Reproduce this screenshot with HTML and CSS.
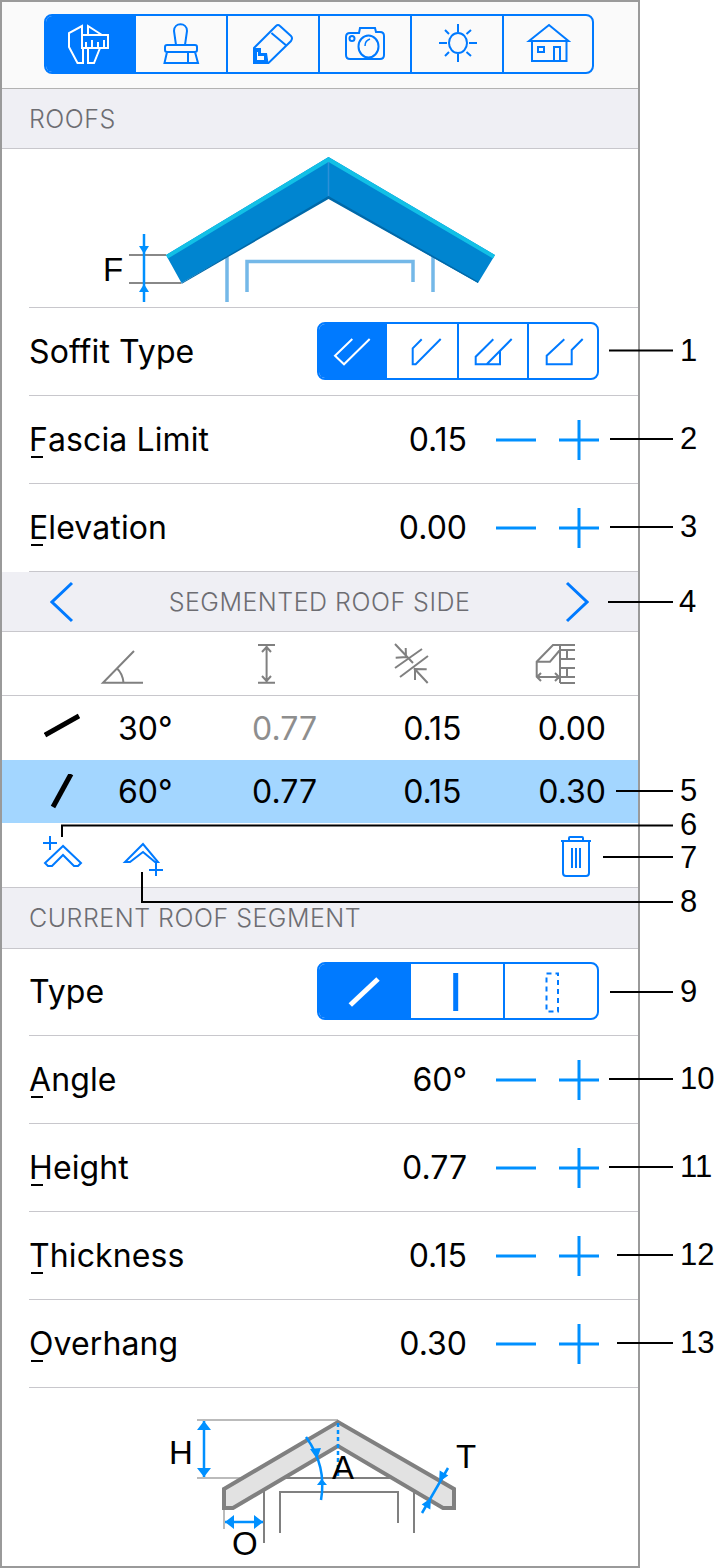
FILE: index.html
```html
<!DOCTYPE html>
<html lang="en">
<head>
  <meta charset="UTF-8" />
  <title>Roofs</title>
  <link rel="stylesheet" href="styles.css">
</head>
<body>
  <div class="panel">

    <div class="toolbar">
      <div class="segments tools">
        <div class="seg on">
          <svg class="ic" viewBox="67 21 46 46"><path d="M82 35V26L69 33V47L77.500 63H83V48M88 48V63H94L100 48M88 35V26L102 35M82 35H108V48H82V35M86 48V42M92 48V40M98 48V42M104 48V40"/></svg>
        </div>
        <div class="seg">
          <svg class="ic" viewBox="158 21 46 46"><path d="M176 45L174 31C174 22 187 22 187 31L185 45M167 45H195Q197 45 197 47V50Q197 52 195 52H167Q165 52 165 50V47Q165 45 167 45ZM167 52L164.500 63H198L195 52M188 52V63"/></svg>
        </div>
        <div class="seg">
          <svg class="ic" viewBox="250 21 46 46"><path d="M254 48L276 26Q278 24 280 26L291 36Q293 38 291 41L268.500 63H254ZM271.400 33L285.700 45"/><path class="solid" d="M254 48H261V53H267L268.500 63H254Z"/><path class="knock" d="M257 52H258V56H264V60H257Z"/></svg>
        </div>
        <div class="seg">
          <svg class="ic" viewBox="342 21 46 46"><path d="M350 33H359L360 28H375L376 32H380Q384 32 384 36V55Q384 59 380 59H350Q346 59 346 55V37Q346 33 350 33Z"/><ellipse cx="368.500" cy="46.500" rx="10" ry="11"/><circle cx="352" cy="38.500" r="2.500"/><path class="thin" d="M365 46C365 42 367 40 370 39"/></svg>
        </div>
        <div class="seg">
          <svg class="ic" viewBox="434 21 46 46"><ellipse cx="458" cy="43" rx="9" ry="10"/><path d="M458 24V32M458 54V62M439 43H447M469 43H477M445 30L449 34M471 30L466.500 34M445 56L449 52M471 56L466.500 52"/></svg>
        </div>
        <div class="seg">
          <svg class="ic" viewBox="525 21 46 46"><path d="M529 41L549 25L568.500 41ZM532 41V61H566.500V41M538 47H544V52H538ZM554 61V47H560V61"/></svg>
        </div>
      </div>
    </div>

    <div class="heading h-roofs">ROOFS</div>

    <div class="figure fig-top">
      <svg viewBox="2 149 636 158">
        <path class="wall-light" d="M227 257V302M433 257V292M247 292V261.500H413V282"/>
        <path fill="#0085d0" d="M166 255L328.500 157L495 255L478 283L328.500 198L181.500 283Z"/>
        <path fill="#12c0e6" d="M166 255L328.500 157L495 255L493 258.500L328.500 162L168 258.500Z"/>
        <path fill="#0069a9" d="M181.500 283L328.500 196L478 281.500V283L328.500 199L181.500 284Z"/>
        <path stroke="#2c90d8" stroke-width="1.500" d="M328.500 162V196"/>
        <path class="dim-gray" d="M129 255H166M129 283H181"/>
        <path class="dim-blue" d="M144 234V302"/>
        <path fill="#0090ff" d="M139 246H149L144 254ZM139 292H149L144 284Z"/>
        <text class="dim-text" x="103" y="281">F</text>
      </svg>
    </div>

    <div class="row row-seg">
      <span class="label">Soffit Type</span>
      <div class="segments soffit">
        <div class="seg on">
          <svg class="ic" viewBox="329 328 46 46"><path d="M352.300 339L335 355.700L344 364.300L369.700 339"/></svg>
        </div>
        <div class="seg">
          <svg class="ic" viewBox="399 328 46 46"><path d="M421.700 339.300L412.700 348.300V364.300H415.700L440.700 339"/></svg>
        </div>
        <div class="seg">
          <svg class="ic" viewBox="470 328 46 46"><path d="M493.300 339.300L475.700 356.700V364.300H500V351M511.700 339L486.700 364.300"/></svg>
        </div>
        <div class="seg">
          <svg class="ic" viewBox="540 328 46 46"><path d="M564.300 339.300L546.700 355.700V364.300H571.700V350L582.700 339"/></svg>
        </div>
      </div>
    </div>

    <div class="row">
      <span class="label"><u>F</u>ascia Limit</span>
      <span class="value">0.15</span>
      <div class="stepper">
        <svg viewBox="0 0 40 40"><path d="M0 20H40"/></svg>
        <svg viewBox="0 0 40 40"><path d="M0 20H40M20 0V40"/></svg>
      </div>
    </div>

    <div class="row">
      <span class="label"><u>E</u>levation</span>
      <span class="value">0.00</span>
      <div class="stepper">
        <svg viewBox="0 0 40 40"><path d="M0 20H40"/></svg>
        <svg viewBox="0 0 40 40"><path d="M0 20H40M20 0V40"/></svg>
      </div>
    </div>

    <div class="heading h-nav">
      <svg class="chev" viewBox="0 0 24 42"><path d="M22 2L2 21L22 40"/></svg>
      <span>SEGMENTED ROOF SIDE</span>
      <svg class="chev" viewBox="0 0 24 42"><path d="M2 2L22 21L2 40"/></svg>
    </div>

    <div class="col-icons">
      <svg class="ic-gray" viewBox="100 641 46 46"><path d="M134 651L103 682.700H143M116.600 668C121 672 123 677 123.500 682.700"/></svg>
      <svg class="ic-gray" viewBox="243 641 46 46"><path d="M257 645H274M257 682.700H274M265.600 645V682.700M261 652L265.600 647L270 652M261 676L265.600 681L270 676"/></svg>
      <svg class="ic-gray" viewBox="388 641 46 46"><path d="M395 668L422 649M400 677L428 656M395 644L413 663M405.700 648L406 657L395.700 657.700M427.700 683L414 668.300M426.700 669.300L415 669L415 680"/></svg>
      <svg class="ic-gray" viewBox="532 641 46 46"><path d="M575 645H553L536.700 661.700V677M536.700 661.700H550L560 650M560 645V683M567 650V659M567 668V677M560 650H575M560 659H575M560 668H575M560 677H575M560 683H575M537 677H559M541 673L537 677L541 681M555 673L559 677L555 681"/></svg>
    </div>

    <div class="seg-row">
      <div class="first-cell">
        <svg class="slant" viewBox="44 710 36 36"><path d="M45 735L79 716"/></svg>
        <span>30°</span>
      </div>
      <span class="muted">0.77</span>
      <span>0.15</span>
      <span>0.00</span>
    </div>

    <div class="seg-row selected">
      <div class="first-cell">
        <svg class="slant" viewBox="44 773 36 36"><path d="M53 806L71 773"/></svg>
        <span>60°</span>
      </div>
      <span>0.77</span>
      <span>0.15</span>
      <span>0.30</span>
    </div>

    <div class="actions">
      <svg class="ic-act add-left" viewBox="40 835 46 36"><path d="M63 846L45 863L48 866H52L63 855L74 866H78L81 863Z"/><path d="M43 843H57M50 836V850"/></svg>
      <svg class="ic-act add-right" viewBox="120 840 46 36"><path d="M143 844L125 862H130L143 852L155 862H158Z"/><path d="M149 870H163M156 863V877"/></svg>
      <svg class="ic-act trash" viewBox="556 832 40 48"><path d="M561 841H591M569 840V838Q569 837 570 837H582Q583 837 583 838V840M563 841V873Q563 876 566 876H586Q589 876 589 873V841M572 848V868M576 848V868M580 848V868"/></svg>
    </div>

    <div class="heading h-current">CURRENT ROOF SEGMENT</div>

    <div class="row row-seg row-type">
      <span class="label">Type</span>
      <div class="segments types">
        <div class="seg on">
          <svg class="ic" viewBox="339 966 46 46"><path class="thick" d="M376 977L348.300 1003"/></svg>
        </div>
        <div class="seg">
          <svg class="ic" viewBox="434 966 46 46"><path class="thick" d="M455.700 971V1009"/></svg>
        </div>
        <div class="seg">
          <svg class="ic" viewBox="528 966 46 46"><rect class="dashed" x="546.500" y="971.500" width="11.500" height="38"/></svg>
        </div>
      </div>
    </div>

    <div class="row">
      <span class="label"><u>A</u>ngle</span>
      <span class="value">60°</span>
      <div class="stepper">
        <svg viewBox="0 0 40 40"><path d="M0 20H40"/></svg>
        <svg viewBox="0 0 40 40"><path d="M0 20H40M20 0V40"/></svg>
      </div>
    </div>

    <div class="row">
      <span class="label"><u>H</u>eight</span>
      <span class="value">0.77</span>
      <div class="stepper">
        <svg viewBox="0 0 40 40"><path d="M0 20H40"/></svg>
        <svg viewBox="0 0 40 40"><path d="M0 20H40M20 0V40"/></svg>
      </div>
    </div>

    <div class="row">
      <span class="label"><u>T</u>hickness</span>
      <span class="value">0.15</span>
      <div class="stepper">
        <svg viewBox="0 0 40 40"><path d="M0 20H40"/></svg>
        <svg viewBox="0 0 40 40"><path d="M0 20H40M20 0V40"/></svg>
      </div>
    </div>

    <div class="row">
      <span class="label"><u>O</u>verhang</span>
      <span class="value">0.30</span>
      <div class="stepper">
        <svg viewBox="0 0 40 40"><path d="M0 20H40"/></svg>
        <svg viewBox="0 0 40 40"><path d="M0 20H40M20 0V40"/></svg>
      </div>
    </div>

    <div class="figure fig-bottom">
      <svg viewBox="2 1387 636 178">
        <path class="dim-light" d="M197 1419H338M197 1477H290M224 1507V1528"/>
        <path class="wall" d="M280 1477H392M264 1490V1542M280 1532V1491H398V1522M414 1490V1532"/>
        <path fill="#e2e2e2" stroke="#808080" stroke-width="4" d="M224 1488L338 1421L454 1488V1507H443L338 1445L233 1507H224Z"/>
        <path class="dim-blue" d="M204 1420V1476M225 1521H263M422 1512L448 1467"/>
        <path class="dim-blue dash" d="M338 1422V1477"/>
        <path class="dim-blue" fill="none" d="M306 1436Q327 1465 321 1499"/>
        <path fill="#0090ff" d="M204 1420L211 1429H197ZM204 1476L197 1467H211ZM225 1521L234 1514V1528ZM263 1521L254 1514V1528ZM317 1458L310 1448L321 1447ZM321.700 1477.700L327 1484H317ZM439 1481L448.300 1474.500L439.700 1469.500ZM431 1497L421.700 1503.500L430.300 1508.500Z"/>
        <text class="dim-text" x="169" y="1463">H</text>
        <text class="dim-text" x="332" y="1478">A</text>
        <text class="dim-text" x="456" y="1467">T</text>
        <text class="dim-text" x="232" y="1554">O</text>
      </svg>
    </div>
  </div>

  <!-- numbered leader lines sit on top of the panel -->
  <svg class="callouts" viewBox="0 0 717 1568">
    <path d="M609 350.500H673M610 439H673M610 527H673M608 602H673M616 791H673M62 837V825.500H673M603 857H673M142 872V902H673M610 992H673M609 1079H673M609 1167H673M617 1255H673M617 1343H673"/>
    <text x="680" y="361">1</text>
    <text x="680" y="449">2</text>
    <text x="680" y="537">3</text>
    <text x="679" y="612">4</text>
    <text x="680" y="801">5</text>
    <text x="680" y="835">6</text>
    <text x="680" y="868">7</text>
    <text x="680" y="912">8</text>
    <text x="680" y="1002">9</text>
    <text x="680" y="1089">10</text>
    <text x="680" y="1177">11</text>
    <text x="680" y="1265">12</text>
    <text x="680" y="1353">13</text>
  </svg>
</body>
</html>
```

FILE: styles.css
```css
body {
  margin: 0;
  background: white;
  font-family: Inter, "Liberation Sans", sans-serif;
  color: #000;
}

.panel {
  width: 640px;
  height: 1568px;
  box-sizing: border-box;
  border: 2px solid #9a9a9a;
  background: white;
}

.toolbar {
  height: 87px;
  box-sizing: border-box;
  padding: 12px 0 0 42px;
  background: #fafafa;
  border-bottom: 1px solid #b2b2b2;
}

/* Segmented controls */
.segments {
  display: flex;
  box-sizing: border-box;
  border: 2px solid #007aff;
  border-radius: 8px;
  overflow: hidden;
  background: white;
}

.seg {
  flex: none;
  box-sizing: border-box;
  display: flex;
  align-items: center;
  justify-content: center;
  border-left: 2px solid #007aff;
}

.seg:first-child {
  border-left: none;
}

.seg.on {
  background: #007aff;
}

.tools {
  width: 550px;
  height: 60px;
  background: #fafafa;
}

.tools .seg {
  width: 92px;
}

.tools .seg:first-child {
  width: 88px;
}

.tools .seg:last-child {
  width: 90px;
}

.soffit,
.types {
  width: 282px;
  height: 58px;
}

.soffit {
  margin-bottom: 2px;
}

.soffit .seg {
  width: 70px;
}

.soffit .seg:first-child {
  width: 66px;
}

.soffit .seg:nth-child(2) {
  width: 72px;
}

.types .seg {
  width: 94px;
}

.types .seg:first-child {
  width: 90px;
}

.ic {
  width: 46px;
  height: 46px;
  fill: none;
  stroke: #007aff;
  stroke-width: 2;
}

.on .ic {
  stroke: white;
}

.ic .solid {
  fill: #007aff;
  stroke: none;
}

.ic .knock {
  fill: #fafafa;
  stroke: none;
}

.ic .thin {
  stroke-width: 1.5;
}

.ic .thick {
  stroke-width: 5;
}

.ic .dashed {
  stroke-dasharray: 5 4;
}

/* Section headings */
.heading {
  box-sizing: border-box;
  display: flex;
  align-items: center;
  background: #efeff4;
  border-bottom: 1.5px solid #c8c7cc;
  color: #6d6d72;
  font-size: 25px;
  font-weight: 300;
  letter-spacing: 0.5px;
  padding-left: 27px;
}

.h-roofs {
  height: 60px;
}

.h-current {
  height: 61px;
}

.h-nav {
  height: 60px;
  padding: 0 49px 0 48px;
  justify-content: space-between;
}

.chev {
  width: 24px;
  height: 42px;
  fill: none;
  stroke: #007aff;
  stroke-width: 3;
}

/* Figures */
.figure svg {
  display: block;
  width: 636px;
}

.fig-top {
  height: 159px;
}

.fig-top svg {
  height: 158px;
}

.fig-top::after {
  content: "";
  display: block;
  margin-left: 27px;
  border-bottom: 1.5px solid #c8c7cc;
}

.fig-bottom svg {
  height: 178px;
}

.wall-light {
  fill: none;
  stroke: #74b8e8;
  stroke-width: 3.5;
}

.wall {
  fill: none;
  stroke: #808080;
  stroke-width: 2;
}

.dim-gray {
  stroke: #888;
  stroke-width: 2;
}

.dim-light {
  stroke: #bbb;
  stroke-width: 2;
}

.dim-blue {
  stroke: #0090ff;
  stroke-width: 2.5;
}

.dash {
  stroke-dasharray: 4 3;
}

.dim-text {
  font-family: "Liberation Sans", sans-serif;
  font-size: 33px;
}

/* Setting rows */
.row {
  height: 88px;
  box-sizing: border-box;
  margin-left: 27px;
  padding-right: 39px;
  display: flex;
  align-items: center;
  border-bottom: 1.5px solid #c8c7cc;
  font-size: 32px;
}

.row-type {
  height: 87px;
  padding-bottom: 2px;
}

.label {
  flex: 1;
  letter-spacing: 0.1px;
}

.label u {
  position: relative;
  text-decoration: none;
}

/* short mark under the shortcut letter, narrower than the glyph */
.label u::after {
  content: "";
  position: absolute;
  left: 2px;
  bottom: 1px;
  width: 12px;
  height: 2px;
  background: #000;
}

.value {
  margin-right: 29px;
}

.stepper {
  display: flex;
  gap: 23px;
}

.stepper svg {
  width: 40px;
  height: 40px;
  display: block;
  fill: none;
  stroke: #0090ff;
  stroke-width: 3;
}

/* Roof side table */
.col-icons {
  height: 64px;
  box-sizing: border-box;
  padding-left: 49px;
  display: grid;
  grid-template-columns: repeat(4, 144px);
  justify-items: center;
  align-items: center;
  border-bottom: 1.5px solid #c8c7cc;
}

.ic-gray {
  width: 46px;
  height: 46px;
  fill: none;
  stroke: #808080;
  stroke-width: 2;
}

.seg-row {
  height: 64px;
  padding-left: 26px;
  display: grid;
  grid-template-columns: repeat(4, 144.500px);
  align-items: center;
  justify-items: end;
  font-size: 32px;
}

.seg-row.selected {
  height: 63px;
  background: #a3d6ff;
}

.first-cell {
  width: 100%;
  display: flex;
  align-items: center;
  justify-content: space-between;
  padding-left: 16px;
  box-sizing: border-box;
}

.slant {
  width: 36px;
  height: 36px;
  stroke: #000;
  stroke-width: 5;
}

.muted {
  color: #8e8e8e;
}

.actions {
  position: relative;
  height: 65px;
  box-sizing: border-box;
  border-bottom: 1.5px solid #c8c7cc;
}

/* the three action icons share one row but sit close to the callout ends */
.ic-act {
  position: absolute;
  fill: none;
  stroke: #007aff;
  stroke-width: 2;
}

.add-left {
  left: 38px;
  top: 12px;
  width: 46px;
  height: 36px;
}

.add-right {
  left: 118px;
  top: 17px;
  width: 46px;
  height: 36px;
}

.trash {
  left: 554px;
  top: 9px;
  width: 40px;
  height: 48px;
}

/* Callouts */
.callouts {
  position: absolute;
  top: 0;
  left: 0;
  width: 717px;
  height: 1568px;
  pointer-events: none;
}

.callouts path {
  fill: none;
  stroke: #000;
  stroke-width: 2;
}

.callouts text {
  font-family: "Liberation Sans", sans-serif;
  font-size: 31px;
}
```
